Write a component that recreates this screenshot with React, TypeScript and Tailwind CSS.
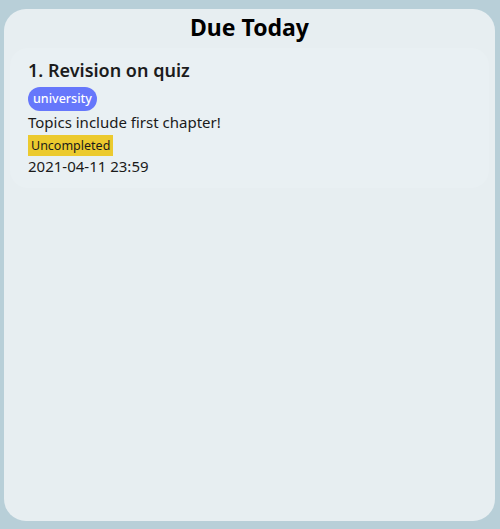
const task = {
  title: "1. Revision on quiz",
  tag: "university",
  description: "Topics include first chapter!",
  status: "Uncompleted",
  due: "2021-04-11 23:59",
}

export default function App() {
  return (
    <div
      className="w-[500px] h-[529px] bg-[#b8cfd8] pt-[9px] pb-[8px] pl-[4px] pr-[5px] text-[#1a1a1a]"
      style={{ fontFamily: '"Noto Sans", "Open Sans", sans-serif' }}
    >
      <div className="h-full rounded-[22px] bg-[#e7eef1] flex flex-col">
        <h1 className="text-center text-[23px] font-bold leading-[36px] text-black">
          Due Today
        </h1>
        <div className="mx-[6px] mt-[3px] rounded-[18px] bg-[#e9f0f3] pl-[18px] pt-[8px] pb-[12px]">
          <div className="text-[18px] font-semibold leading-[28px] text-[#1c1c1c]">
            {task.title}
          </div>
          <div className="mt-[1px]">
            <span className="inline-block rounded-full bg-[#6677fb] px-[5px] text-[12.5px] font-medium leading-[24px] text-white">
              {task.tag}
            </span>
          </div>
          <div className="text-[15px] leading-[20px] mt-[1px]">{task.description}</div>
          <div>
            <span className="inline-block bg-[#ecca2e] px-[3px] text-[12.5px] leading-[21px] text-[#1a1a1a]">
              {task.status}
            </span>
          </div>
          <div className="text-[15px] leading-[20px]">{task.due}</div>
        </div>
      </div>
    </div>
  )
}
